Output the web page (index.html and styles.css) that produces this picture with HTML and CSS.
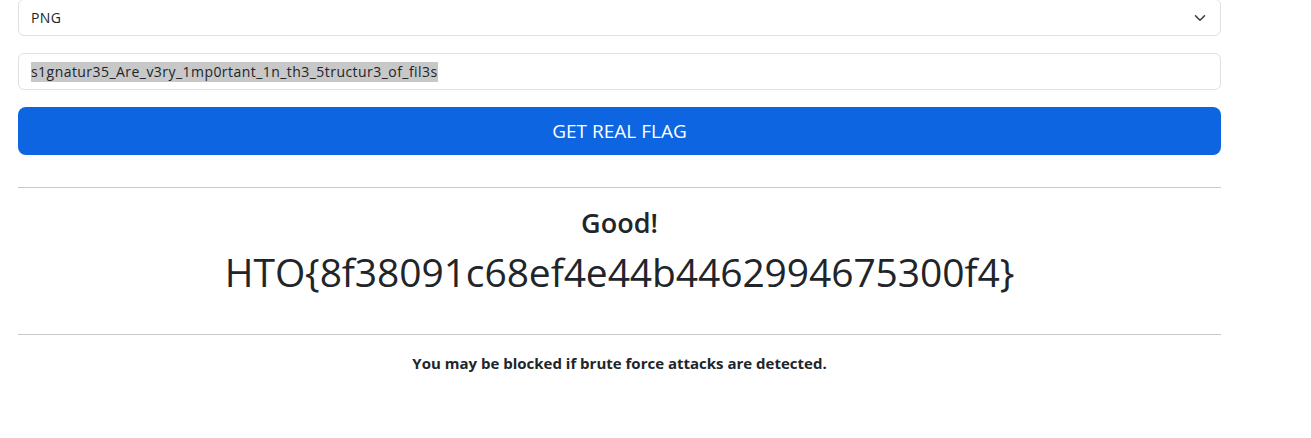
FILE: index.html
```html
<!DOCTYPE html>
<html lang="en">
<head>
<meta charset="utf-8">
<title>Get Real Flag</title>
<link rel="stylesheet" href="styles.css">
</head>
<body>
<main class="page">
  <form class="form">
    <div class="select">
      <span class="select-value">PNG</span>
      <svg class="chevron" viewBox="0 0 16 16" width="12" height="12" aria-hidden="true"><path d="m2 5 6 6 6-6" fill="none" stroke="#343a40" stroke-width="2" stroke-linecap="round" stroke-linejoin="round"/></svg>
    </div>
    <div class="input"><span class="selected">s1gnatur35_Are_v3ry_1mp0rtant_1n_th3_5tructur3_of_fil3s</span></div>
    <button type="button" class="btn">GET REAL FLAG</button>
  </form>
  <hr class="rule rule-top">
  <section class="result">
    <h3 class="good">Good!</h3>
    <h1 class="flag">HTO{8f38091c68ef4e44b4462994675300f4}</h1>
  </section>
  <hr class="rule rule-bottom">
  <p class="note">You may be blocked if brute force attacks are detected.</p>
</main>
</body>
</html>
```

FILE: styles.css
```css
* { box-sizing: border-box; }
html, body { margin: 0; padding: 0; background: #fff; }
body {
  font-family: "Open Sans", "Noto Sans", "Liberation Sans", sans-serif;
  color: #212529;
}
.page {
  width: 1221px;
  padding-left: 18px;
  margin-top: -1px;
}
.form {
  display: flex;
  flex-direction: column;
}
.select, .input {
  height: 37px;
  border: 1px solid #dee2e6;
  border-radius: 6px;
  display: flex;
  align-items: center;
  padding: 0 12px;
  font-size: 14px;
  letter-spacing: 0.45px;
}
.select {
  justify-content: space-between;
  margin-bottom: 17px;
}
.chevron { width: 12px; height: 12px; margin-right: 2px; }
.input { margin-bottom: 17px; }
.selected {
  background: #c8c8c8;
  line-height: 20px;
}
.btn {
  height: 48px;
  border: 0;
  border-radius: 8px;
  background: #0d65e2;
  color: #fff;
  font-family: inherit;
  font-size: 19px;
  padding: 0;
}
.rule {
  border: 0;
  border-top: 1px solid #c9c9c9;
  margin: 0;
}
.rule-top { margin-top: 32px; }
.result {
  text-align: center;
  padding-top: 20px;
  height: 146px;
}
.good {
  margin: 0;
  font-size: 27px;
  line-height: 30px;
  font-weight: 600;
}
.flag {
  margin: 10px 0 0;
  font-size: 39px;
  line-height: 48px;
  font-weight: 500;
  letter-spacing: -0.1px;
}
.note {
  margin: 18px 0 0;
  text-align: center;
  font-size: 15px;
  font-weight: 700;
}
```
